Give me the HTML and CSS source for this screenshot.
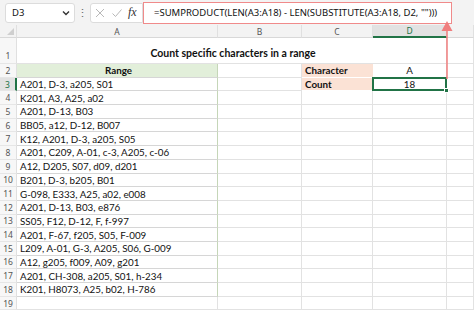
FILE: index.html
```html
<!DOCTYPE html>
<html lang="en">
<head>
  <meta charset="UTF-8" />
  <title>Count specific characters in a range</title>
  <link rel="stylesheet" href="styles.css">
</head>
<body>
  <div class="toolbar">
    <div class="namebox">
      <span>D3</span>
      <svg class="chev" width="8" height="6" viewBox="0 0 8 6"><path d="M1 1.5 L4 4.5 L7 1.5" fill="none" stroke="#333" stroke-width="1.4"/></svg>
    </div>
    <span class="dots">&#8942;</span>
    <div class="fxbox">
      <svg width="12" height="12" viewBox="0 0 12 12"><path d="M2 2 L10 10 M10 2 L2 10" stroke="#b8b8b8" stroke-width="1"/></svg>
      <svg width="12" height="12" viewBox="0 0 12 12"><path d="M1.5 6.5 L4.5 9.5 L10.5 2.5" fill="none" stroke="#b8b8b8" stroke-width="1"/></svg>
      <span class="fx">fx</span>
    </div>
    <div class="formula">=SUMPRODUCT(LEN(A3:A18) - LEN(SUBSTITUTE(A3:A18, D2, "")))</div>
  </div>

  <div class="sheet">
    <div class="hd corner"></div>
    <div class="hd col">A</div>
    <div class="hd col">B</div>
    <div class="hd col">C</div>
    <div class="hd col sel">D</div>
    <div class="hd col"></div>

    <div class="hd row r1">1</div>
    <div class="c title">Count specific characters in a range</div>
    <div class="c"></div>

    <div class="hd row">2</div>
    <div class="c ta head">Range</div>
    <div class="c"></div>
    <div class="c lab">Character</div>
    <div class="c mid">A</div>
    <div class="c"></div>

    <div class="hd row sel">3</div>
    <div class="c ta">A201, D-3, a205, S01</div>
    <div class="c"></div>
    <div class="c lab">Count</div>
    <div class="c mid active">18<i class="handle"></i></div>
    <div class="c"></div>

    <div class="hd row">4</div>
    <div class="c ta">K201, A3, A25, a02</div>
    <div class="c"></div><div class="c"></div><div class="c"></div><div class="c"></div>

    <div class="hd row">5</div>
    <div class="c ta">A201, D-13, B03</div>
    <div class="c"></div><div class="c"></div><div class="c"></div><div class="c"></div>

    <div class="hd row">6</div>
    <div class="c ta">BB05, a12, D-12, B007</div>
    <div class="c"></div><div class="c"></div><div class="c"></div><div class="c"></div>

    <div class="hd row">7</div>
    <div class="c ta">K12, A201, D-3, a205, S05</div>
    <div class="c"></div><div class="c"></div><div class="c"></div><div class="c"></div>

    <div class="hd row">8</div>
    <div class="c ta">A201, C209, A-01, c-3, A205, c-06</div>
    <div class="c"></div><div class="c"></div><div class="c"></div><div class="c"></div>

    <div class="hd row">9</div>
    <div class="c ta">A12, D205, S07, d09, d201</div>
    <div class="c"></div><div class="c"></div><div class="c"></div><div class="c"></div>

    <div class="hd row">10</div>
    <div class="c ta">B201, D-3, b205, B01</div>
    <div class="c"></div><div class="c"></div><div class="c"></div><div class="c"></div>

    <div class="hd row">11</div>
    <div class="c ta">G-098, E333, A25, a02, e008</div>
    <div class="c"></div><div class="c"></div><div class="c"></div><div class="c"></div>

    <div class="hd row">12</div>
    <div class="c ta">A201, D-13, B03, e876</div>
    <div class="c"></div><div class="c"></div><div class="c"></div><div class="c"></div>

    <div class="hd row">13</div>
    <div class="c ta">SS05, F12, D-12, F, f-997</div>
    <div class="c"></div><div class="c"></div><div class="c"></div><div class="c"></div>

    <div class="hd row">14</div>
    <div class="c ta">A201, F-67, f205, S05, F-009</div>
    <div class="c"></div><div class="c"></div><div class="c"></div><div class="c"></div>

    <div class="hd row">15</div>
    <div class="c ta">L209, A-01, G-3, A205, S06, G-009</div>
    <div class="c"></div><div class="c"></div><div class="c"></div><div class="c"></div>

    <div class="hd row">16</div>
    <div class="c ta">A12, g205, f009, A09, g201</div>
    <div class="c"></div><div class="c"></div><div class="c"></div><div class="c"></div>

    <div class="hd row">17</div>
    <div class="c ta">A201, CH-308, a205, S01, h-234</div>
    <div class="c"></div><div class="c"></div><div class="c"></div><div class="c"></div>

    <div class="hd row">18</div>
    <div class="c ta">K201, H8073, A25, b02, H-786</div>
    <div class="c"></div><div class="c"></div><div class="c"></div><div class="c"></div>

    <div class="hd row">19</div>
    <div class="c"></div>
    <div class="c"></div><div class="c"></div><div class="c"></div><div class="c"></div>
  </div>

  <!-- callout arrow from the formula to the result -->
  <svg class="arrow" width="14" height="70" viewBox="0 0 14 70">
    <path d="M7 10 L7 58" stroke="#f07e7e" stroke-width="1.5"/>
    <path d="M7 0 L12.5 10 L1.5 10 Z" fill="#f07e7e"/>
  </svg>
</body>
</html>
```

FILE: styles.css
```css
* {
  box-sizing: border-box;
}

body {
  margin: 0;
  width: 474px;
  height: 312px;
  overflow: hidden;
  background: #fff;
  font-family: Lato, 'Liberation Sans', sans-serif;
  color: #111;
}

.toolbar {
  height: 25px;
  background: #f3f3f3;
  display: flex;
  align-items: center;
  padding: 0 0 0 5px;
}

.namebox {
  width: 70px;
  height: 20px;
  background: #fff;
  border: 1px solid #dcdcdc;
  border-radius: 3px;
  display: flex;
  align-items: center;
  justify-content: space-between;
  padding: 0 4px 0 6px;
  font-family: 'Noto Sans', sans-serif;
  font-size: 9.5px;
}

.dots {
  width: 15px;
  text-align: center;
  color: #666;
  font-size: 11px;
}

.fxbox {
  width: 53px;
  height: 20px;
  background: #fff;
  border: 1px solid #dcdcdc;
  border-radius: 3px 0 0 3px;
  display: flex;
  align-items: center;
  gap: 5px;
  padding-left: 3px;
}

.fx {
  font-family: 'Liberation Serif', serif;
  font-style: italic;
  font-size: 12px;
  color: #333;
}

.formula {
  width: 309px;
  height: 22px;
  background: #fff;
  border: 1.5px solid #f08a8a;
  display: flex;
  align-items: center;
  padding-left: 10px;
  font-family: 'Noto Sans', sans-serif;
  font-size: 9.5px;
  white-space: nowrap;
}

.sheet {
  display: grid;
  grid-template-columns: 17px 201px 84px 71px 74px 27px;
  grid-template-rows: 13px 26px repeat(18, 13.7px);
}

.hd {
  background: #f3f3f3;
  color: #555;
  font-family: 'Noto Sans', sans-serif;
  font-size: 8.5px;
  display: flex;
  align-items: center;
  justify-content: center;
  border-right: 1px solid #e0e0e0;
  border-bottom: 1px solid #d8d8d8;
}

.hd.row {
  background: #f7f7f7;
  border-bottom-color: #e6e6e6;
}

.hd.r1 {
  align-items: flex-end;
  padding-bottom: 2px;
}

.corner {
  position: relative;
}

.corner::after {
  content: '';
  position: absolute;
  right: 2px;
  bottom: 2px;
  border-left: 7px solid transparent;
  border-bottom: 7px solid #cfcfcf;
}

.hd.sel {
  background: #e2e2e2;
  color: #217346;
}

.hd.col.sel {
  border-bottom: 2px solid #217346;
}

.hd.row.sel {
  border-right: 2px solid #217346;
}

.c {
  border-right: 1px solid #e2e2e2;
  border-bottom: 1px solid #e2e2e2;
  font-size: 9.8px;
  display: flex;
  align-items: center;
  padding-left: 3px;
  white-space: nowrap;
}

.title {
  grid-column: span 4;
  justify-content: center;
  font-weight: bold;
  font-size: 10.5px;
  padding-top: 4px;
}

.ta {
  border-right-color: #c5d6b8;
  border-bottom-color: #d6d6d6;
}

.head {
  background: #e2efda;
  justify-content: center;
  font-weight: bold;
}

.lab {
  background: #fbe2d5;
  font-weight: bold;
  border-right-color: #fbe2d5;
  border-bottom-color: #fff;
}

.mid {
  justify-content: center;
  padding-left: 0;
}

.active {
  position: relative;
  border: 2px solid #217346;
  margin: -1px 0 0 -1px;
}

.handle {
  position: absolute;
  right: -4px;
  bottom: -4px;
  width: 5px;
  height: 5px;
  background: #217346;
  border: 1px solid #fff;
}

.arrow {
  position: absolute;
  left: 440px;
  top: 21px;
}
```
